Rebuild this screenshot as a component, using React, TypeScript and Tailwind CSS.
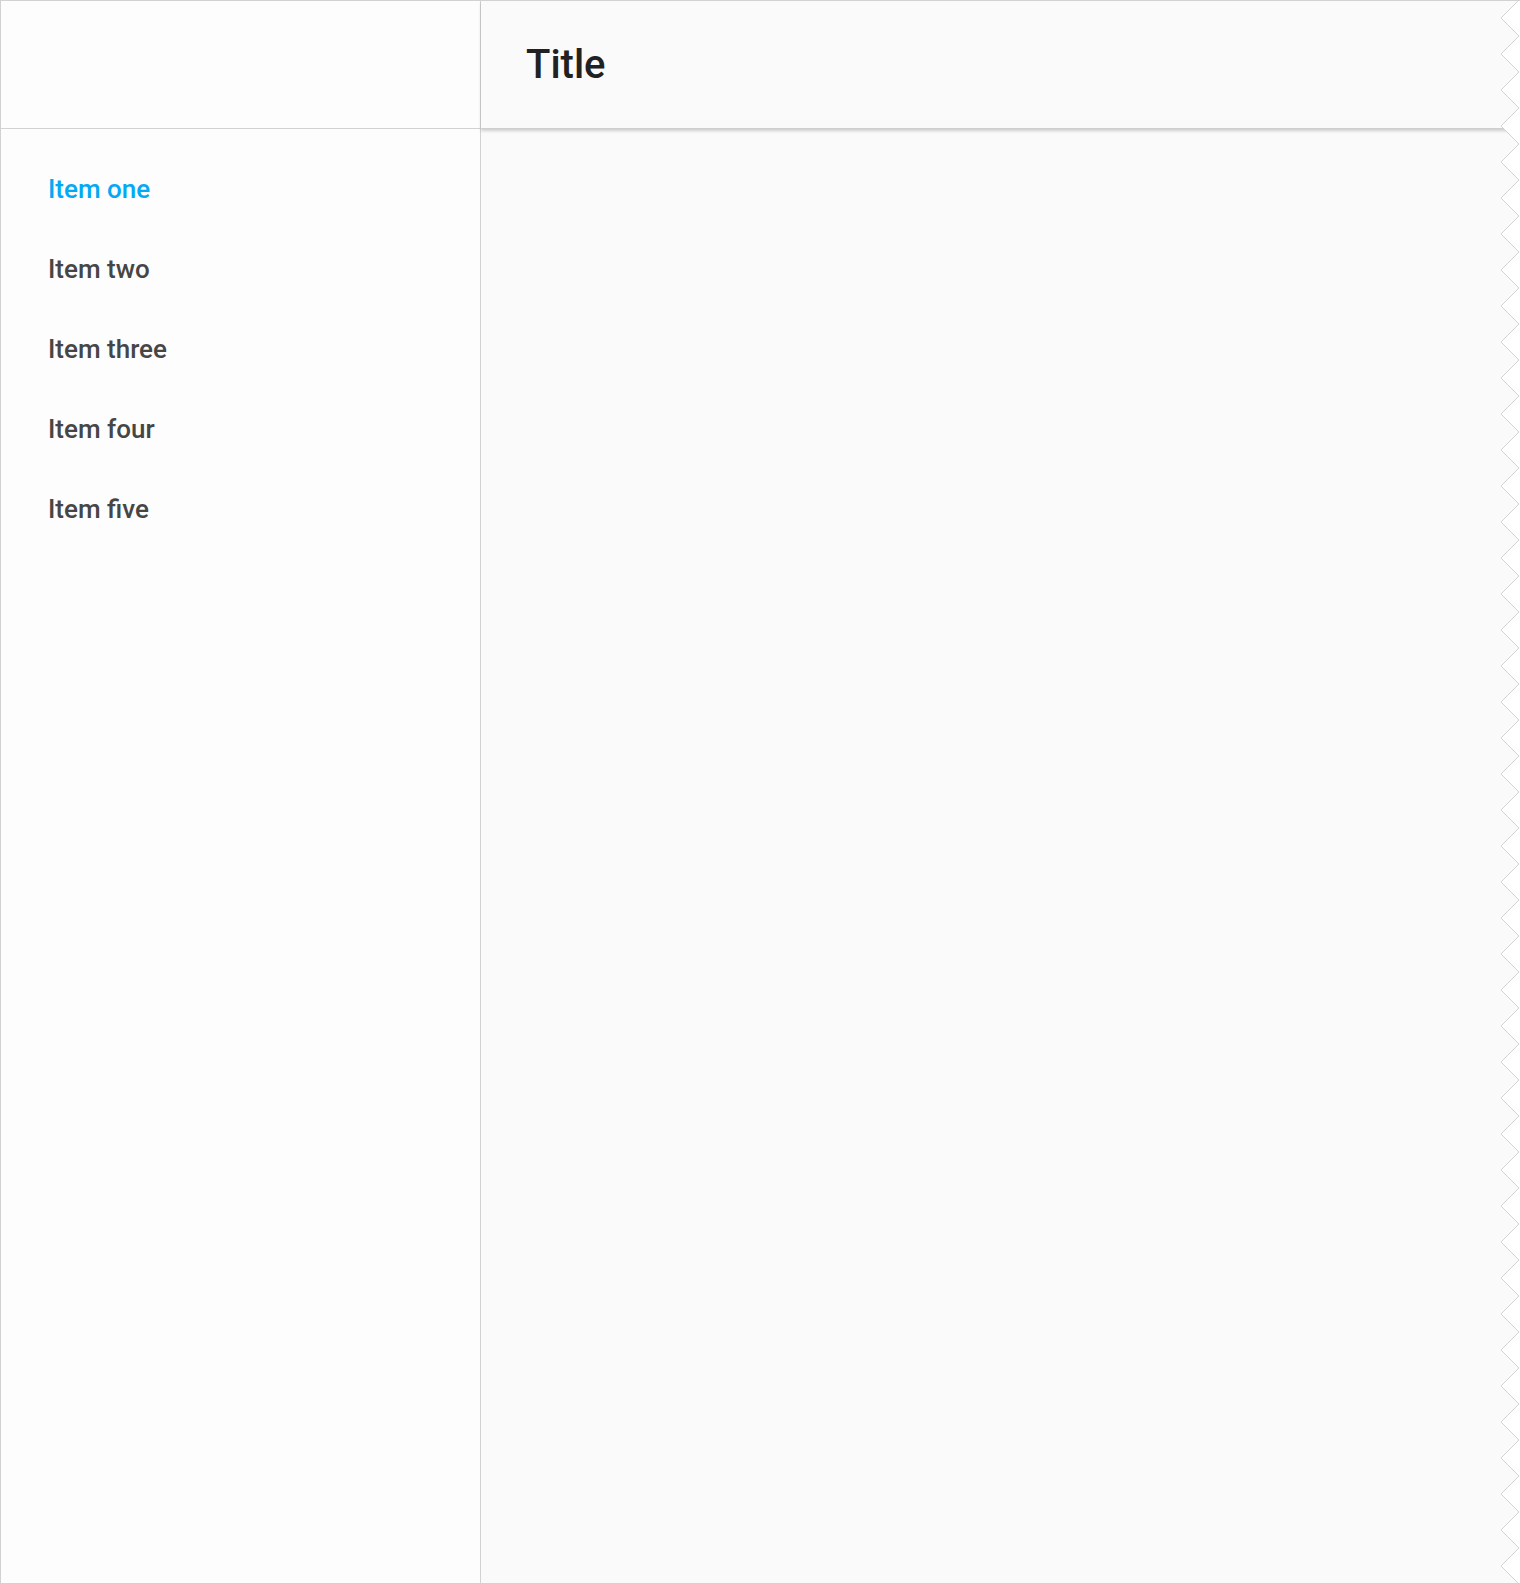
import React from "react";

const items = ["Item one", "Item two", "Item three", "Item four", "Item five"];

function Zigzag() {
  const pts: string[] = [];
  for (let k = 0; k < 46; k++) {
    pts.push(`19,${-1 + 36 * k}`);
    pts.push(`1,${17 + 36 * k}`);
  }
  const line = pts.join(" ");
  const poly = `20,-1 ${line} 20,1700`;
  return (
    <svg
      className="absolute top-0 right-0 z-20 pointer-events-none"
      width={20}
      height={1584}
      viewBox="0 0 20 1584"
    >
      <polygon points={poly} fill="#ffffff" />
      <polyline points={line} fill="none" stroke="#d2d2d2" strokeWidth={1} />
    </svg>
  );
}

export default function App() {
  return (
    <div
      className="relative w-[1520px] h-[1584px] flex border-t border-l border-b border-[#d2d2d2] overflow-hidden bg-[#fafafa]"
      style={{ fontFamily: "Roboto, 'Noto Sans', sans-serif" }}
    >
      <aside className="w-[480px] shrink-0 flex flex-col bg-[#fdfdfd] border-r border-[#d2d2d2]">
        <div className="h-[128px] shrink-0 border-b border-[#d2d2d2]" />
        <nav className="flex flex-col pt-[20px]">
          {items.map((it, i) => (
            <div
              key={it}
              className={`h-[80px] flex items-center pl-[47px] text-[26px] font-medium ${
                i === 0 ? "text-[#03a9f4]" : "text-[#464646]"
              }`}
            >
              {it}
            </div>
          ))}
        </nav>
      </aside>
      <main className="flex-1 flex flex-col bg-[#fafafa]">
        <header className="relative z-10 h-[128px] shrink-0 flex items-center pl-[45px] bg-[#fafafa] border-b border-[#cfcfcf] shadow-[0_2px_3px_rgba(0,0,0,0.18)]">
          <h1 className="text-[40px] font-medium text-[#212121] leading-none">Title</h1>
        </header>
        <div className="flex-1" />
      </main>
      <Zigzag />
    </div>
  );
}
